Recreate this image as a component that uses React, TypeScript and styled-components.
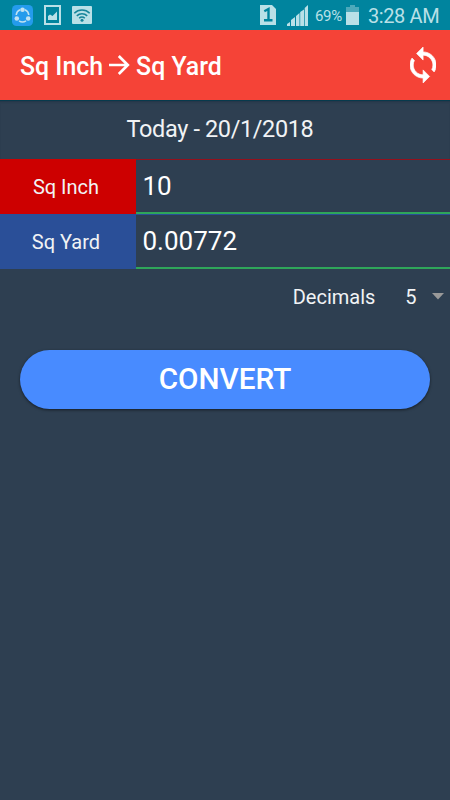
import React from "react";
import styled, { createGlobalStyle } from "styled-components";

const GlobalStyle = createGlobalStyle`
  * { box-sizing: border-box; }
  body { margin: 0; background: #2e3f51; font-family: Roboto, "Liberation Sans", sans-serif; }
`;

const Screen = styled.main`
  width: 450px;
  height: 800px;
  overflow: hidden;
  display: flex;
  flex-direction: column;
  background: #2e3f51;
  color: #f1f3f5;
`;

const StatusBar = styled.div`
  height: 30px;
  flex: none;
  display: flex;
  align-items: center;
  padding: 0 11px 0 12px;
  background: #00849e;
  color: #b9e0e7;
  svg { display: block; flex: none; }
`;

const Notifications = styled.div`
  display: flex;
  align-items: center;
  gap: 11px;
  margin-right: auto;
`;

const SystemInfo = styled.div`
  display: flex;
  align-items: center;
  height: 30px;
`;

const SignalWrap = styled.span`
  margin-left: 11px;
`;

const Battery = styled.span`
  margin: 2px 4px 0 7px;
  width: 27px;
  font-size: 15px;
  letter-spacing: -0.35px;
  line-height: 20px;
`;

const Clock = styled.time`
  margin: 2px 0 0 9px;
  width: 71px;
  font-size: 20px;
  letter-spacing: -0.4px;
  line-height: 24px;
  white-space: nowrap;
`;

const AppBar = styled.header`
  height: 70px;
  flex: none;
  display: flex;
  align-items: center;
  justify-content: space-between;
  padding: 4px 14px 0 20px;
  background: #f54337;
  color: #fff;
`;

const Title = styled.h1`
  margin: 0;
  display: flex;
  align-items: center;
  font-size: 24.9px;
  font-weight: 500;
  line-height: 30px;
  white-space: nowrap;
  svg { margin: -4px 6px 0 6px; }
`;

const IconButton = styled.button`
  display: flex;
  padding: 0;
  margin-top: -4px;
  border: 0;
  background: none;
  color: inherit;
`;

const DateLine = styled.div`
  height: 59px;
  flex: none;
  padding-right: 10px;
  border-top: 1px solid #073a4c;
  box-shadow: inset 0 2px 2px -1px #223648;
  text-align: center;
  font-size: 23.5px;
  letter-spacing: -0.38px;
  line-height: 57px;
`;

const UnitRow = styled.label<{ $color: string; $line: string }>`
  height: 55px;
  flex: none;
  display: grid;
  grid-template-columns: 136px 1fr;
  grid-template-rows: 100%;
  background: linear-gradient(to right, ${(p) => p.$color} 136px, transparent 136px);
  border-top: 1px solid ${(p) => p.$line};
`;

const UnitName = styled.span<{ $color: string }>`
  margin-top: -1px;
  padding: 1px 4px 0 0;
  background: ${(p) => p.$color};
  text-align: center;
  font-size: 20px;
  line-height: 55px;
`;

const UnitValue = styled.input`
  min-width: 0;
  width: 100%;
  height: 100%;
  padding: 0 6px 1px 6.5px;
  border: 0;
  border-bottom: 2px solid #2fa65a;
  border-radius: 0;
  outline: 0;
  background: transparent;
  color: #fff;
  font: 400 26px Roboto, sans-serif;
`;

const DecimalsRow = styled.div`
  height: 56px;
  flex: none;
  display: flex;
  align-items: center;
  justify-content: flex-end;
  padding: 0 6.4px 1px 0;
  font-size: 20px;
  line-height: 24px;
`;

const DecimalsValue = styled.span`
  margin: 0 15px 0 30px;
`;

const ConvertButton = styled.button`
  height: 59px;
  flex: none;
  margin: 25px 20px 0;
  padding: 0 0 2px;
  border: 0;
  border-radius: 30px;
  background: #488bff;
  box-shadow: 0 1px 3px rgba(0, 0, 0, 0.55);
  color: #fff;
  font: 500 29.7px Roboto, sans-serif;
`;

const ShareIcon = () => (
  <svg width="21" height="21" viewBox="0 0 21 21">
    <rect width="21" height="21" rx="4.5" fill="#249bec" />
    <g fill="none" stroke="#c0e2f2" strokeWidth="1.5">
      <path d="M8 4.8A6.4 6.4 0 0 0 4.2 10M13 4.8a6.4 6.4 0 0 1 3.8 5.2M7 15.8a6.4 6.4 0 0 0 7 0" />
    </g>
    <g fill="#c0e2f2">
      <circle cx="10.5" cy="4.7" r="2.3" />
      <circle cx="4.8" cy="13.5" r="2.3" />
      <circle cx="16.2" cy="13.5" r="2.3" />
    </g>
  </svg>
);

const PictureIcon = () => (
  <svg width="17" height="20" viewBox="0 0 17 20">
    <path fill="#b9e0e7" fillRule="evenodd" d="M0 0h17v20H0zM2 2v16h13V2z" />
    <path fill="#b9e0e7" d="M4 15v-4l2-1.5L8.5 11 13 6.5V15z" />
  </svg>
);

const WifiIcon = () => (
  <svg width="20" height="18" viewBox="0 0 20 18">
    <rect width="20" height="18" rx="1" fill="#b9e0e7" />
    <g fill="none" stroke="#16849a" strokeWidth="1.6">
      <path d="M2.3 7.2a11 11 0 0 1 15.4 0M4.8 9.9a7.4 7.4 0 0 1 10.4 0M7.2 12.3a4 4 0 0 1 5.6 0" />
    </g>
    <circle cx="10" cy="14.3" r="1.5" fill="#16849a" />
  </svg>
);

const SimIcon = () => (
  <svg width="16" height="20" viewBox="0 0 16 20">
    <path fill="#b9e0e7" d="M0 0h12l4 4v16H0z" />
    <path fill="none" stroke="#00849e" strokeWidth="2.4" d="M4.3 6.2 8.5 4v11M4 15.3h8.5" />
  </svg>
);

const SignalIcon = () => (
  <svg width="21" height="21" viewBox="0 0 21 21" fill="#b9e0e7">
    <path d="M0 21v-2l3-2v4zM4 21v-6l4-3v9zM9 21V11l3.5-3v13zM13.2 21V7L17 4.5V21zM17.7 21V3L21 0v21z" />
  </svg>
);

const BatteryIcon = () => (
  <svg width="13" height="20" viewBox="0 0 13 20">
    <path fill="#4ca9bb" d="M4 0h5v2h4v6H0V2h4z" />
    <path fill="#b9e0e7" d="M0 7h13v13H0z" />
  </svg>
);

const ArrowIcon = () => (
  <svg width="21" height="20" viewBox="0 0 21 20" fill="none" stroke="#fff" strokeWidth="2.7">
    <path d="M0 10h18.5M9.8 1l9 9-9 9" />
  </svg>
);

const SyncIcon = () => (
  <svg width="26.2" height="36" viewBox="4 1 16 22" fill="#fff" stroke="#fff" strokeWidth="0.4">
    <path d="M12 4V1L8 5l4 4V6c3.31 0 6 2.69 6 6 0 1.01-.25 1.97-.7 2.8l1.46 1.46C19.54 15.03 20 13.57 20 12c0-4.42-3.58-8-8-8zm0 14c-3.31 0-6-2.69-6-6 0-1.01.25-1.97.7-2.8L5.24 7.74C4.46 8.97 4 10.43 4 12c0 4.42 3.58 8 8 8v3l4-4-4-4v3z" />
  </svg>
);

const DropdownIcon = () => (
  <svg width="12" height="7" viewBox="0 0 12 7">
    <path fill="#999" d="M0 0h12L6 6.5z" />
  </svg>
);

export default function App() {
  return (
    <>
      <GlobalStyle />
      <Screen>
        <StatusBar>
          <Notifications>
            <ShareIcon />
            <PictureIcon />
            <WifiIcon />
          </Notifications>
          <SystemInfo>
            <SimIcon />
            <SignalWrap><SignalIcon /></SignalWrap>
            <Battery>69%</Battery>
            <BatteryIcon />
            <Clock>3:28 AM</Clock>
          </SystemInfo>
        </StatusBar>
        <AppBar>
          <Title>
            Sq Inch
            <ArrowIcon />
            Sq Yard
          </Title>
          <IconButton aria-label="Swap units"><SyncIcon /></IconButton>
        </AppBar>
        <DateLine>Today - 20/1/2018</DateLine>
        <UnitRow $color="#cd0000" $line="#95101c">
          <UnitName $color="#cd0000">Sq Inch</UnitName>
          <UnitValue defaultValue="10" />
        </UnitRow>
        <UnitRow $color="#2a4f98" $line="#2a4f98">
          <UnitName $color="#2a4f98">Sq Yard</UnitName>
          <UnitValue defaultValue="0.00772" />
        </UnitRow>
        <DecimalsRow>
          Decimals
          <DecimalsValue>5</DecimalsValue>
          <DropdownIcon />
        </DecimalsRow>
        <ConvertButton>CONVERT</ConvertButton>
      </Screen>
    </>
  );
}
